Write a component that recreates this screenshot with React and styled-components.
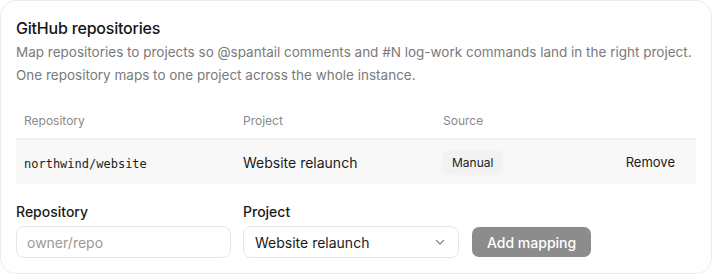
import React from 'react'
import styled, { createGlobalStyle } from 'styled-components'

const Global = createGlobalStyle`
body{
  margin:0;
  background:#ffffff;
  font-family: Inter, "Noto Sans", sans-serif;
  color:#1a1a1a;
}
`;

const Card = styled.div`
box-sizing:border-box;
width:712px;
height:274px;
border:1px solid #ececec;
border-radius:16px;
padding:14px 15px 0 15px;
background:#fff;
`;

const Title = styled.h2`
margin:0;
font-size:16px;
font-weight:500;
line-height:26px;
color:#161616;
letter-spacing:-0.2px;
`;

const Desc = styled.p`
margin:0 0 15px 0;
font-size:13.5px;
line-height:23px;
color:#7a7a7a;
white-space:nowrap;
`;

const Table = styled.div`
display:flex;
flex-direction:column;
`;

const Row = styled.div`
display:grid;
grid-template-columns:219px 200px 1fr auto;
align-items:center;
height:${({head})=> head ? '36px' : '44px'};
padding:0 21px 0 8px;
background:${({head})=> head ? 'transparent' : '#f8f8f8'};
border-bottom:${({head})=> head ? '2px solid #f0f0f0' : 'none'};
`;

const HeadCell = styled.div`
font-size:12px;
color:#8a8a8a;
`;

const Cell = styled.div`
font-size:14px;
color:#1a1a1a;
`;

const Mono = styled.span`
font-family:"DejaVu Sans Mono", monospace;
font-size:12px;
color:#222;
`;

const Badge = styled.span`
display:inline-block;
padding:4px 9px;
font-size:12px;
color:#222;
background:#f2f2f2;
border-radius:6px;
box-shadow:0 0 4px rgba(0,0,0,0.04);
`;

const Remove = styled.button`
border:none;
background:transparent;
font-family:inherit;
font-size:13px;
color:#1a1a1a;
padding:0;
cursor:pointer;
`;

const Form = styled.div`
display:flex;
align-items:flex-end;
gap:12px;
margin-top:19px;
`;

const Field = styled.div`
display:flex;
flex-direction:column;
gap:5px;
width:${({w})=>w}px;
`;

const Label = styled.label`
font-size:14px;
font-weight:500;
color:#1a1a1a;
line-height:18px;
`;

const Input = styled.input`
box-sizing:border-box;
height:32px;
border:1px solid #e6e6e6;
border-radius:8px;
padding:0 10px;
font-family:inherit;
font-size:14px;
color:#1a1a1a;
outline:none;
&::placeholder{ color:#9a9a9a; }
`;

const Select = styled.div`
box-sizing:border-box;
height:32px;
border:1px solid #e6e6e6;
border-radius:8px;
padding:0 12px 0 11px;
display:flex;
align-items:center;
justify-content:space-between;
font-size:14px;
color:#1a1a1a;
`;

const Button = styled.button`
height:30px;
margin-left:1px;
margin-bottom:1px;
padding:0 15px;
border:none;
border-radius:7px;
background:#8c8c8c;
color:#fff;
font-family:inherit;
font-size:14px;
font-weight:500;
`;

function App() {
  return (
    <>
      <Global />
      <Card>
        <Title>GitHub repositories</Title>
        <Desc>
          Map repositories to projects so @spantail comments and #N log-work commands land in the right project.
          <br />
          One repository maps to one project across the whole instance.
        </Desc>
        <Table>
          <Row head>
            <HeadCell>Repository</HeadCell>
            <HeadCell>Project</HeadCell>
            <HeadCell>Source</HeadCell>
            <HeadCell />
          </Row>
          <Row>
            <Cell><Mono>northwind/website</Mono></Cell>
            <Cell>Website relaunch</Cell>
            <Cell><Badge>Manual</Badge></Cell>
            <Remove>Remove</Remove>
          </Row>
        </Table>
        <Form>
          <Field w={215}>
            <Label>Repository</Label>
            <Input placeholder="owner/repo" />
          </Field>
          <Field w={216}>
            <Label>Project</Label>
            <Select>
              <span>Website relaunch</span>
              <svg width="12" height="12" viewBox="0 0 12 12" fill="none">
                <path d="M2.5 4.5 L6 8 L9.5 4.5" stroke="#888" strokeWidth="1.2" strokeLinecap="round" strokeLinejoin="round" />
              </svg>
            </Select>
          </Field>
          <Button>Add mapping</Button>
        </Form>
      </Card>
    </>
  )
}

export default App
